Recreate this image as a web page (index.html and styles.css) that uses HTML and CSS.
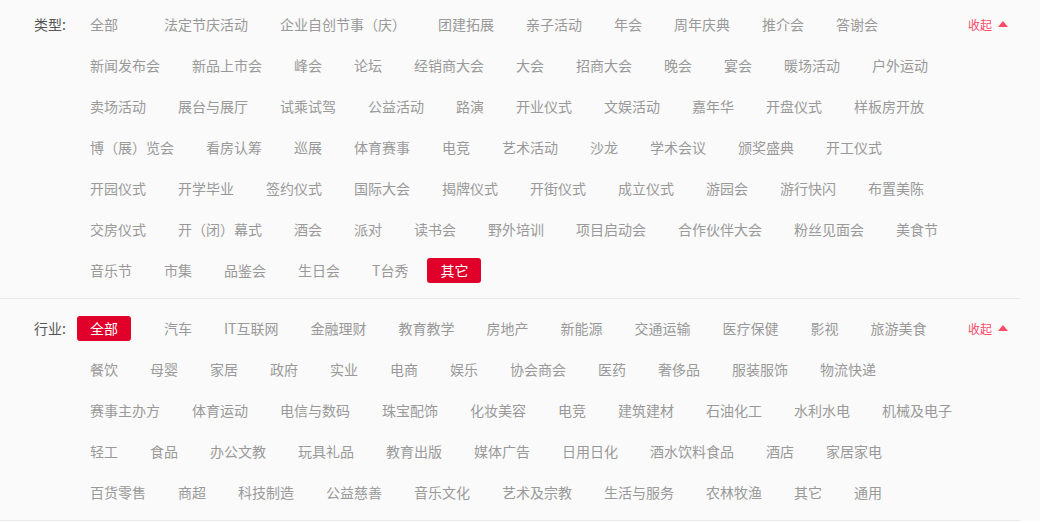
FILE: index.html
```html
<!DOCTYPE html>
<html lang="zh-CN">
<head>
  <meta charset="UTF-8" />
  <meta name="viewport" content="width=device-width, initial-scale=1.0"/>
  <title>活动筛选</title>
  <link rel="stylesheet" href="styles.css">
</head>
<body>

  <div class="filter">

    <div class="filter-row first">
      <div class="filter-label">类型:</div>
      <div class="filter-items">
        <a class="item all">全部</a>
        <a class="item">法定节庆活动</a>
        <a class="item">企业自创节事（庆）</a>
        <a class="item">团建拓展</a>
        <a class="item">亲子活动</a>
        <a class="item">年会</a>
        <a class="item">周年庆典</a>
        <a class="item">推介会</a>
        <a class="item">答谢会</a>
        <a class="item">新闻发布会</a>
        <a class="item">新品上市会</a>
        <a class="item">峰会</a>
        <a class="item">论坛</a>
        <a class="item">经销商大会</a>
        <a class="item">大会</a>
        <a class="item">招商大会</a>
        <a class="item">晚会</a>
        <a class="item">宴会</a>
        <a class="item">暖场活动</a>
        <a class="item">户外运动</a>
        <a class="item">卖场活动</a>
        <a class="item">展台与展厅</a>
        <a class="item">试乘试驾</a>
        <a class="item">公益活动</a>
        <a class="item">路演</a>
        <a class="item">开业仪式</a>
        <a class="item">文娱活动</a>
        <a class="item">嘉年华</a>
        <a class="item">开盘仪式</a>
        <a class="item">样板房开放</a>
        <a class="item">博（展）览会</a>
        <a class="item">看房认筹</a>
        <a class="item">巡展</a>
        <a class="item">体育赛事</a>
        <a class="item">电竞</a>
        <a class="item">艺术活动</a>
        <a class="item">沙龙</a>
        <a class="item">学术会议</a>
        <a class="item">颁奖盛典</a>
        <a class="item">开工仪式</a>
        <a class="item">开园仪式</a>
        <a class="item">开学毕业</a>
        <a class="item">签约仪式</a>
        <a class="item">国际大会</a>
        <a class="item">揭牌仪式</a>
        <a class="item">开街仪式</a>
        <a class="item">成立仪式</a>
        <a class="item">游园会</a>
        <a class="item">游行快闪</a>
        <a class="item">布置美陈</a>
        <a class="item">交房仪式</a>
        <a class="item">开（闭）幕式</a>
        <a class="item">酒会</a>
        <a class="item">派对</a>
        <a class="item">读书会</a>
        <a class="item">野外培训</a>
        <a class="item">项目启动会</a>
        <a class="item">合作伙伴大会</a>
        <a class="item">粉丝见面会</a>
        <a class="item">美食节</a>
        <a class="item">音乐节</a>
        <a class="item">市集</a>
        <a class="item">品鉴会</a>
        <a class="item">生日会</a>
        <a class="item">T台秀</a>
        <a class="item active">其它</a>
      </div>
      <a class="toggle">收起<i class="arrow"></i></a>
    </div>

    <div class="filter-row">
      <div class="filter-label">行业:</div>
      <div class="filter-items">
        <a class="item all active">全部</a>
        <a class="item">汽车</a>
        <a class="item">IT互联网</a>
        <a class="item">金融理财</a>
        <a class="item">教育教学</a>
        <a class="item">房地产</a>
        <a class="item">新能源</a>
        <a class="item">交通运输</a>
        <a class="item">医疗保健</a>
        <a class="item">影视</a>
        <a class="item">旅游美食</a>
        <a class="item">餐饮</a>
        <a class="item">母婴</a>
        <a class="item">家居</a>
        <a class="item">政府</a>
        <a class="item">实业</a>
        <a class="item">电商</a>
        <a class="item">娱乐</a>
        <a class="item">协会商会</a>
        <a class="item">医药</a>
        <a class="item">奢侈品</a>
        <a class="item">服装服饰</a>
        <a class="item">物流快递</a>
        <a class="item">赛事主办方</a>
        <a class="item">体育运动</a>
        <a class="item">电信与数码</a>
        <a class="item">珠宝配饰</a>
        <a class="item">化妆美容</a>
        <a class="item">电竞</a>
        <a class="item">建筑建材</a>
        <a class="item">石油化工</a>
        <a class="item">水利水电</a>
        <a class="item">机械及电子</a>
        <a class="item">轻工</a>
        <a class="item">食品</a>
        <a class="item">办公文教</a>
        <a class="item">玩具礼品</a>
        <a class="item">教育出版</a>
        <a class="item">媒体广告</a>
        <a class="item">日用日化</a>
        <a class="item">酒水饮料食品</a>
        <a class="item">酒店</a>
        <a class="item">家居家电</a>
        <a class="item">百货零售</a>
        <a class="item">商超</a>
        <a class="item">科技制造</a>
        <a class="item">公益慈善</a>
        <a class="item">音乐文化</a>
        <a class="item">艺术及宗教</a>
        <a class="item">生活与服务</a>
        <a class="item">农林牧渔</a>
        <a class="item">其它</a>
        <a class="item">通用</a>
      </div>
      <a class="toggle">收起<i class="arrow"></i></a>
    </div>

  </div>

</body>
</html>
```

FILE: styles.css
```css
body {
  margin: 0;
  background: #fff;
  font-family: "Noto Sans CJK SC", "Noto Sans", sans-serif;
  font-size: 14px;
}

.filter {
  width: 1020px;
  padding-right: 20px;
  background: #fafafa;
}

.filter-row {
  display: flex;
  align-items: flex-start;
  padding: 17px 0 15px;
  border-bottom: 1px solid #e8e8e8;
}

.filter-row.first {
  padding-top: 12px;
}

.filter-label {
  width: 43px;
  padding-left: 34px;
  height: 25px;
  line-height: 25px;
  color: #555;
}

.filter-items {
  width: 891px;
  display: flex;
  flex-wrap: wrap;
  column-gap: 6px;
  row-gap: 16px;
}

.item {
  display: block;
  height: 25px;
  line-height: 25px;
  padding: 0 13px;
  border-radius: 3px;
  color: #999;
  white-space: nowrap;
  cursor: pointer;
}

.item.all {
  margin-right: 14px;
}

.item.active {
  background: #e0002a;
  color: #fff;
}

.toggle {
  display: flex;
  align-items: center;
  height: 25px;
  font-size: 12px;
  color: #ff4a68;
  white-space: nowrap;
  cursor: pointer;
}

.arrow {
  display: inline-block;
  width: 0;
  height: 0;
  margin-left: 6px;
  margin-top: -1px;
  border-left: 5px solid transparent;
  border-right: 5px solid transparent;
  border-bottom: 6px solid #ff4a68;
}
```
